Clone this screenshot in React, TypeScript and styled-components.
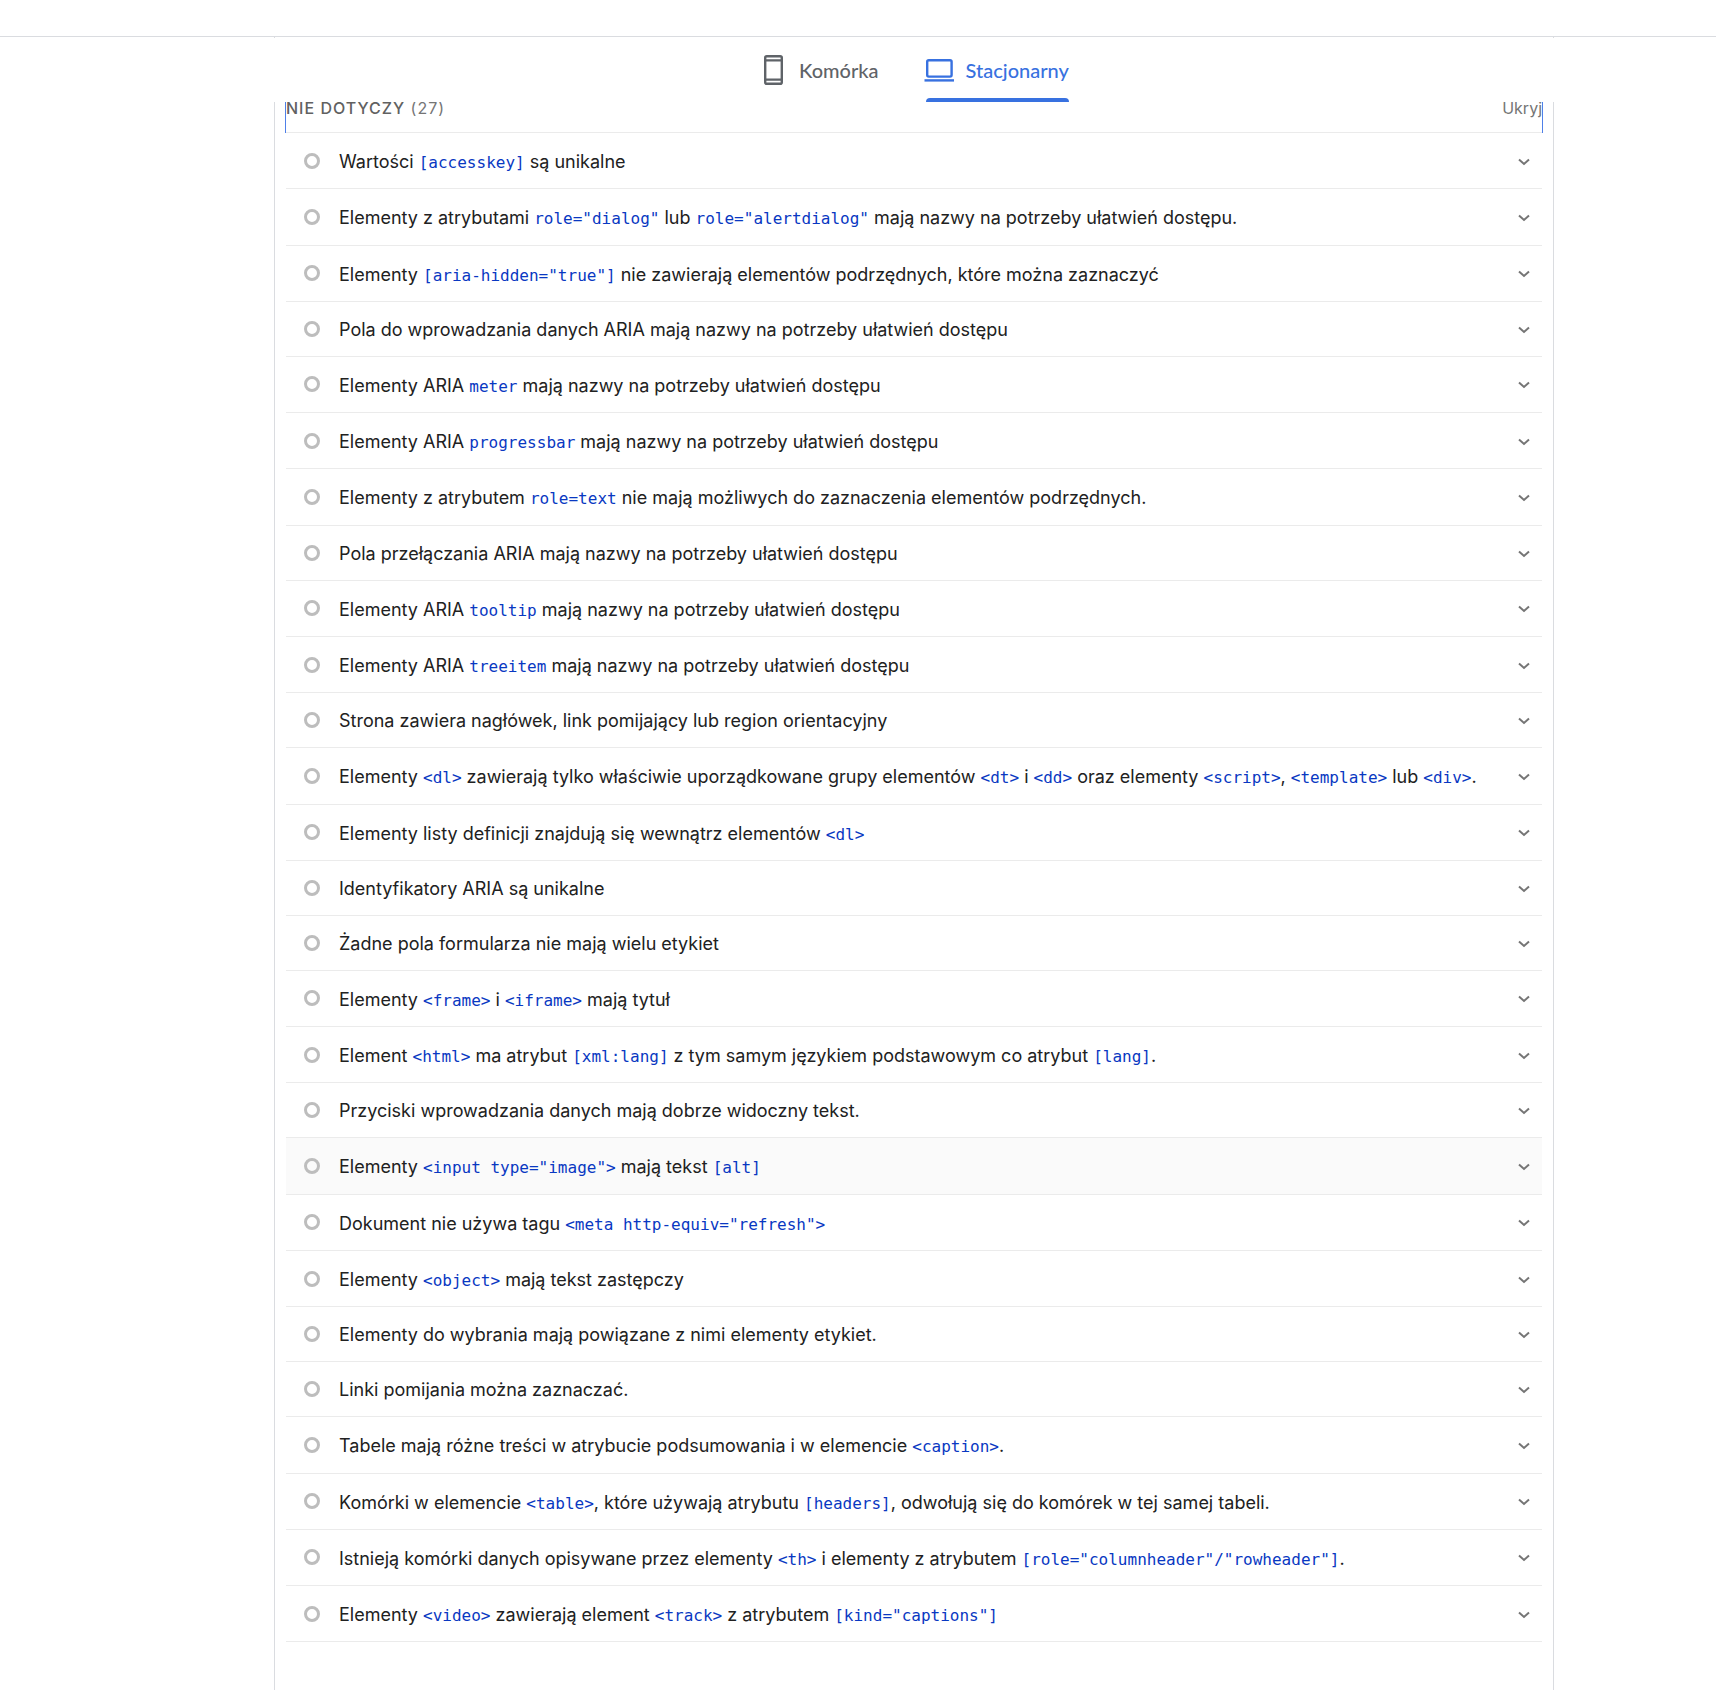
import React, { useState } from "react";
import styled, { createGlobalStyle } from "styled-components";

const GlobalStyle = createGlobalStyle`
  *, *::before, *::after { box-sizing: border-box; }
  body {
    margin: 0;
    background: #fff;
    color: #212121;
    font-family: Inter, "Noto Sans", sans-serif;
  }
`;

const Page = styled.div`
  min-height: 100vh;
  display: flex;
  flex-direction: column;
`;

const TopBar = styled.header`
  height: 37px;
  flex: none;
  border-bottom: 1px solid #dadce0;
`;

const Content = styled.main`
  flex: 1;
  display: flex;
  flex-direction: column;
  width: 100%;
  padding-left: 112px;
`;

const Column = styled.div`
  width: 100%;
  max-width: 1280px;
  margin: 0 auto;
`;

const CardEdge = styled(Column)`
  height: 1px;
  border: solid #dadce0;
  border-width: 0 1px;
`;

const Tabs = styled.div`
  position: sticky;
  top: 0;
  z-index: 1;
  display: flex;
  justify-content: center;
  gap: 43px;
  height: 64px;
  background: #fff;
`;

const Tab = styled.button<{ $selected?: boolean }>`
  display: flex;
  align-items: center;
  gap: 12px;
  padding: 0 2px 0 0;
  border: 0;
  background: none;
  color: ${(p) => (p.$selected ? "#3871e0" : "#5f6368")};
  font: 500 20px/24px Lato, "Noto Sans", sans-serif;
  position: relative;
  cursor: pointer;

  &::after {
    content: "";
    display: ${(p) => (p.$selected ? "block" : "none")};
    position: absolute;
    left: 2px;
    right: 2px;
    bottom: 0;
    height: 4px;
    border-radius: 4px 4px 0 0;
    background: currentColor;
  }
`;

const TabIcon = styled.svg`
  display: block;
  width: 30px;
  height: 30px;
  fill: none;
  stroke: currentColor;
  stroke-width: 2.4;
`;

const Card = styled(Column)`
  flex: 1;
  padding: 0 11px;
  border: solid #dadce0;
  border-width: 0 1px;
`;

const GroupHeader = styled.button`
  display: flex;
  align-items: flex-end;
  justify-content: space-between;
  width: 100%;
  height: 31px;
  padding: 0 0 12px;
  border: 0;
  border-bottom: 1px solid #ebebeb;
  box-shadow: -1px 0 #4f80e8, 1px 0 #4f80e8;
  background: none;
  color: #757575;
  font: 400 16px/24px Inter, "Noto Sans", sans-serif;
  cursor: pointer;
`;

const GroupTitle = styled.span`
  letter-spacing: 1px;
`;

const GroupName = styled.span`
  color: #616161;
  font-weight: 500;
`;

const Audit = styled.details`
  border-bottom: 1px solid #ebebeb;
`;

const AuditRow = styled.summary<{ $hovered?: boolean }>`
  display: flex;
  align-items: center;
  gap: 19px;
  padding: 17px 12px 15px 18px;
  background: ${(p) => (p.$hovered ? "#fafafa" : "transparent")};
  list-style: none;
  cursor: pointer;
`;

const Ring = styled.span`
  flex: none;
  width: 16px;
  height: 16px;
  margin-bottom: 2px;
  border: 3px solid #bdbdbd;
  border-radius: 50%;
`;

const AuditTitle = styled.span<{ $withCode?: boolean }>`
  flex: 1;
  font-size: 18px;
  line-height: ${(p) => (p.$withCode ? 1.294 : "22px")};
`;

const Code = styled.code`
  color: #0938c2;
  font: 400 16px/16px "DejaVu Sans Mono", monospace;
`;

const Chevron = styled.svg`
  flex: none;
  width: 12px;
  height: 8px;
  fill: none;
  stroke: #757575;
  stroke-width: 2;
`;

/* Backticks mark the code parts of a title. */
const audits = [
  "Wartości `[accesskey]` są unikalne",
  'Elementy z atrybutami `role="dialog"` lub `role="alertdialog"` mają nazwy na potrzeby ułatwień dostępu.',
  'Elementy `[aria-hidden="true"]` nie zawierają elementów podrzędnych, które można zaznaczyć',
  "Pola do wprowadzania danych ARIA mają nazwy na potrzeby ułatwień dostępu",
  "Elementy ARIA `meter` mają nazwy na potrzeby ułatwień dostępu",
  "Elementy ARIA `progressbar` mają nazwy na potrzeby ułatwień dostępu",
  "Elementy z atrybutem `role=text` nie mają możliwych do zaznaczenia elementów podrzędnych.",
  "Pola przełączania ARIA mają nazwy na potrzeby ułatwień dostępu",
  "Elementy ARIA `tooltip` mają nazwy na potrzeby ułatwień dostępu",
  "Elementy ARIA `treeitem` mają nazwy na potrzeby ułatwień dostępu",
  "Strona zawiera nagłówek, link pomijający lub region orientacyjny",
  "Elementy `<dl>` zawierają tylko właściwie uporządkowane grupy elementów `<dt>` i `<dd>` oraz elementy `<script>`, `<template>` lub `<div>`.",
  "Elementy listy definicji znajdują się wewnątrz elementów `<dl>`",
  "Identyfikatory ARIA są unikalne",
  "Żadne pola formularza nie mają wielu etykiet",
  "Elementy `<frame>` i `<iframe>` mają tytuł",
  "Element `<html>` ma atrybut `[xml:lang]` z tym samym językiem podstawowym co atrybut `[lang]`.",
  "Przyciski wprowadzania danych mają dobrze widoczny tekst.",
  'Elementy `<input type="image">` mają tekst `[alt]`',
  'Dokument nie używa tagu `<meta http-equiv="refresh">`',
  "Elementy `<object>` mają tekst zastępczy",
  "Elementy do wybrania mają powiązane z nimi elementy etykiet.",
  "Linki pomijania można zaznaczać.",
  "Tabele mają różne treści w atrybucie podsumowania i w elemencie `<caption>`.",
  "Komórki w elemencie `<table>`, które używają atrybutu `[headers]`, odwołują się do komórek w tej samej tabeli.",
  'Istnieją komórki danych opisywane przez elementy `<th>` i elementy z atrybutem `[role="columnheader"/"rowheader"]`.',
  'Elementy `<video>` zawierają element `<track>` z atrybutem `[kind="captions"]`',
];

const hoveredAudit = 18;

function AuditItem({ title, hovered }: { title: string; hovered: boolean }) {
  const parts = title.split("`");
  return (
    <Audit>
      <AuditRow $hovered={hovered}>
        <Ring />
        <AuditTitle $withCode={parts.length > 1}>
          {parts.map((part, i) =>
            i % 2 ? <Code key={i}>{part}</Code> : <React.Fragment key={i}>{part}</React.Fragment>
          )}
        </AuditTitle>
        <Chevron viewBox="0 0 12 8" aria-hidden="true">
          <path d="M1 1.5l5 4.5 5-4.5" />
        </Chevron>
      </AuditRow>
    </Audit>
  );
}

export default function App() {
  const [tab, setTab] = useState("desktop");
  const [open, setOpen] = useState(true);
  return (
    <Page>
      <GlobalStyle />
      <TopBar />
      <Content>
        <CardEdge />
        <Tabs role="tablist">
          <Tab role="tab" aria-selected={tab === "mobile"} $selected={tab === "mobile"} onClick={() => setTab("mobile")}>
            <TabIcon viewBox="0 0 30 30" aria-hidden="true">
              <rect x="8.2" y="1.2" width="16.6" height="27.6" rx="1.6" />
              <path d="M8 5.4h17M8 24.6h17" />
            </TabIcon>
            Komórka
          </Tab>
          <Tab role="tab" aria-selected={tab === "desktop"} $selected={tab === "desktop"} onClick={() => setTab("desktop")}>
            <TabIcon viewBox="0 0 30 30" aria-hidden="true">
              <rect x="3.2" y="5.2" width="24.4" height="16.4" rx="1.6" />
              <path d="M0.5 25.4h29.5" />
            </TabIcon>
            Stacjonarny
          </Tab>
        </Tabs>
        <Card>
          <GroupHeader aria-expanded={open} onClick={() => setOpen(!open)}>
            <GroupTitle>
              <GroupName>NIE DOTYCZY</GroupName> (27)
            </GroupTitle>
            <span>Ukryj</span>
          </GroupHeader>
          {open &&
            audits.map((title, i) => (
              <AuditItem key={title} title={title} hovered={i === hoveredAudit} />
            ))}
        </Card>
      </Content>
    </Page>
  );
}
